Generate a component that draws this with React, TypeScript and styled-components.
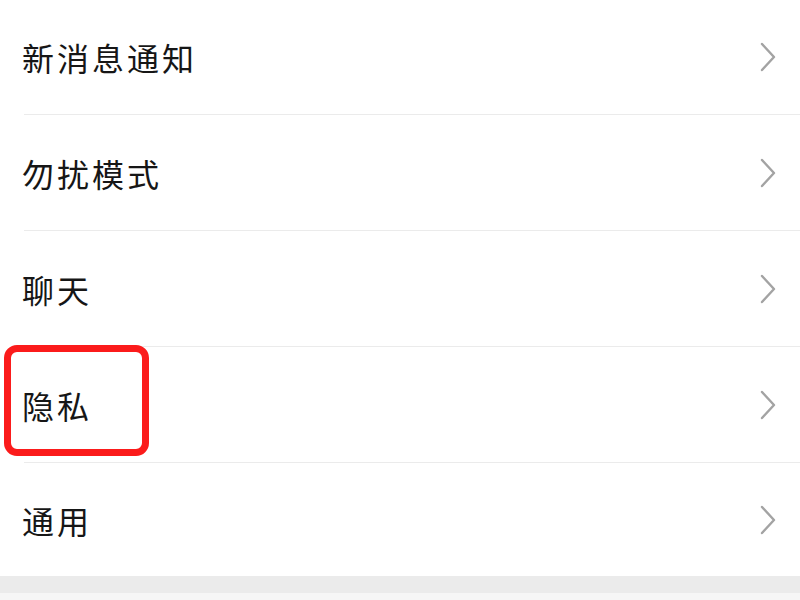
import React from 'react'
import styled, { createGlobalStyle } from 'styled-components'

const GlobalStyle = createGlobalStyle`
    html, body {
        margin: 0;
        padding: 0;
        background: #ffffff;
    }
    body {
        font-family: "Noto Sans CJK SC", "Noto Sans", sans-serif;
    }
`;

const Page = styled.div`
    width: 800px;
    height: 600px;
    overflow: hidden;
    background: #f6f6f6;
    display: flex;
    flex-direction: column;
`;

const List = styled.div`
    background: #ffffff;
    margin-top: -1px;
    display: flex;
    flex-direction: column;
`;

const Row = styled.div<{ $last?: boolean }>`
    position: relative;
    height: ${(p) => (p.$last ? 113 : 115)}px;
    display: flex;
    align-items: center;
    justify-content: space-between;
    padding: 0 24px 0 22px;
    &::after {
        content: '';
        display: ${(p) => (p.$last ? 'none' : 'block')};
        position: absolute;
        left: 24px;
        right: 0;
        bottom: -1px;
        height: 1px;
        background: #ebebeb;
    }
    & + & {
        margin-top: 1px;
    }
`;

const Label = styled.span`
    font-size: 32px;
    letter-spacing: 3px;
    color: #161616;
    line-height: 1;
`;

const Chevron = styled.svg`
    width: 16px;
    height: 30px;
    margin-right: 0;
`;

const Highlight = styled.div`
    position: absolute;
    left: 4px;
    top: -2px;
    width: 145px;
    height: 111px;
    box-sizing: border-box;
    border: 7px solid #fb1b1b;
    border-radius: 13px;
    pointer-events: none;
`;

const Band = styled.div`
    height: 17px;
    background: #ebebeb;
`;

const items = ['新消息通知', '勿扰模式', '聊天', '隐私', '通用'];

const App: React.FC = () => {
    return (
        <Page>
            <GlobalStyle />
            <List>
                {items.map((label, i) => (
                    <Row key={label} $last={i === items.length - 1}>
                        <Label>{label}</Label>
                        <Chevron viewBox="0 0 16 30">
                            <path d="M2 2 L14 15 L2 28" fill="none" stroke="#a3a3a3" strokeWidth="2.4" strokeLinecap="round" strokeLinejoin="round" />
                        </Chevron>
                        {label === '隐私' && <Highlight />}
                    </Row>
                ))}
            </List>
            <Band />
        </Page>
    )
}

export default App
